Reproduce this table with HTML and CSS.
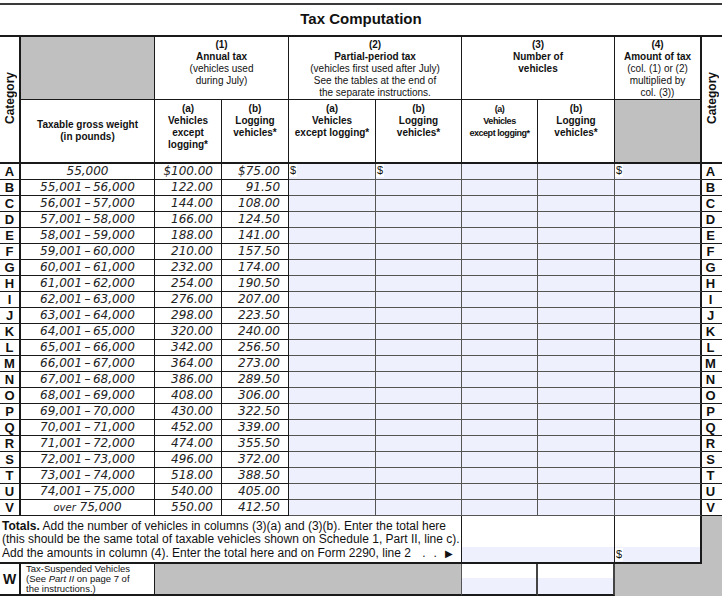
FILE: index.html
```html
<!DOCTYPE html>
<html lang="en">
<head>
<meta charset="utf-8">
<title>Tax Computation</title>
<link rel="stylesheet" href="styles.css">
</head>
<body>
<div class="topline"></div>
<h1 class="title">Tax Computation</h1>
<table class="tax">
  <colgroup>
    <col class="c0"><col class="c1"><col class="c2"><col class="c3"><col class="c4">
    <col class="c5"><col class="c6"><col class="c7"><col class="c8"><col class="c9">
  </colgroup>
  <thead>
    <tr class="hr1">
      <th rowspan="2" class="catv"><span class="vert">Category</span></th>
      <th class="grey"></th>
      <th colspan="2"><b>(1)<br>Annual tax</b><br>(vehicles used<br>during July)</th>
      <th colspan="2"><b>(2)<br>Partial-period tax</b><br>(vehicles first used after July)<br>See the tables at the end of<br>the separate instructions.</th>
      <th colspan="2"><b>(3)<br>Number of<br>vehicles</b></th>
      <th class="c4r"><b>(4)<br>Amount of tax</b><br>(col. (1) or (2)<br>multiplied by<br>col. (3))</th>
      <th rowspan="2" class="catv r"><span class="vert">Category</span></th>
    </tr>
    <tr class="hr2">
      <th class="wt">Taxable gross weight<br>(in pounds)</th>
      <th class="b">(a)<br>Vehicles<br>except<br>logging*</th>
      <th class="b">(b)<br>Logging<br>vehicles*</th>
      <th class="b">(a)<br>Vehicles<br>except logging*</th>
      <th class="b">(b)<br>Logging<br>vehicles*</th>
      <th class="b narrow">(a)<br>Vehicles<br>except logging*</th>
      <th class="b">(b)<br>Logging<br>vehicles*</th>
      <th class="grey c4r"></th>
    </tr>
  </thead>
  <tbody>
    <tr class="d"><td class="cat">A</td><td class="wt">55,000</td><td class="amt">$100.00</td><td class="amt">$75.00</td><td class="in"><span class="dollar">$</span></td><td class="in"><span class="dollar">$</span></td><td class="in"></td><td class="in"></td><td class="in in4"><span class="dollar">$</span></td><td class="cat r">A</td></tr>
    <tr class="d"><td class="cat">B</td><td class="wt">55,001&thinsp;–&thinsp;56,000</td><td class="amt">122.00</td><td class="amt">91.50</td><td class="in"></td><td class="in"></td><td class="in"></td><td class="in"></td><td class="in in4"></td><td class="cat r">B</td></tr>
    <tr class="d"><td class="cat">C</td><td class="wt">56,001&thinsp;–&thinsp;57,000</td><td class="amt">144.00</td><td class="amt">108.00</td><td class="in"></td><td class="in"></td><td class="in"></td><td class="in"></td><td class="in in4"></td><td class="cat r">C</td></tr>
    <tr class="d"><td class="cat">D</td><td class="wt">57,001&thinsp;–&thinsp;58,000</td><td class="amt">166.00</td><td class="amt">124.50</td><td class="in"></td><td class="in"></td><td class="in"></td><td class="in"></td><td class="in in4"></td><td class="cat r">D</td></tr>
    <tr class="d"><td class="cat">E</td><td class="wt">58,001&thinsp;–&thinsp;59,000</td><td class="amt">188.00</td><td class="amt">141.00</td><td class="in"></td><td class="in"></td><td class="in"></td><td class="in"></td><td class="in in4"></td><td class="cat r">E</td></tr>
    <tr class="d"><td class="cat">F</td><td class="wt">59,001&thinsp;–&thinsp;60,000</td><td class="amt">210.00</td><td class="amt">157.50</td><td class="in"></td><td class="in"></td><td class="in"></td><td class="in"></td><td class="in in4"></td><td class="cat r">F</td></tr>
    <tr class="d"><td class="cat">G</td><td class="wt">60,001&thinsp;–&thinsp;61,000</td><td class="amt">232.00</td><td class="amt">174.00</td><td class="in"></td><td class="in"></td><td class="in"></td><td class="in"></td><td class="in in4"></td><td class="cat r">G</td></tr>
    <tr class="d"><td class="cat">H</td><td class="wt">61,001&thinsp;–&thinsp;62,000</td><td class="amt">254.00</td><td class="amt">190.50</td><td class="in"></td><td class="in"></td><td class="in"></td><td class="in"></td><td class="in in4"></td><td class="cat r">H</td></tr>
    <tr class="d"><td class="cat">I</td><td class="wt">62,001&thinsp;–&thinsp;63,000</td><td class="amt">276.00</td><td class="amt">207.00</td><td class="in"></td><td class="in"></td><td class="in"></td><td class="in"></td><td class="in in4"></td><td class="cat r">I</td></tr>
    <tr class="d"><td class="cat">J</td><td class="wt">63,001&thinsp;–&thinsp;64,000</td><td class="amt">298.00</td><td class="amt">223.50</td><td class="in"></td><td class="in"></td><td class="in"></td><td class="in"></td><td class="in in4"></td><td class="cat r">J</td></tr>
    <tr class="d"><td class="cat">K</td><td class="wt">64,001&thinsp;–&thinsp;65,000</td><td class="amt">320.00</td><td class="amt">240.00</td><td class="in"></td><td class="in"></td><td class="in"></td><td class="in"></td><td class="in in4"></td><td class="cat r">K</td></tr>
    <tr class="d"><td class="cat">L</td><td class="wt">65,001&thinsp;–&thinsp;66,000</td><td class="amt">342.00</td><td class="amt">256.50</td><td class="in"></td><td class="in"></td><td class="in"></td><td class="in"></td><td class="in in4"></td><td class="cat r">L</td></tr>
    <tr class="d"><td class="cat">M</td><td class="wt">66,001&thinsp;–&thinsp;67,000</td><td class="amt">364.00</td><td class="amt">273.00</td><td class="in"></td><td class="in"></td><td class="in"></td><td class="in"></td><td class="in in4"></td><td class="cat r">M</td></tr>
    <tr class="d"><td class="cat">N</td><td class="wt">67,001&thinsp;–&thinsp;68,000</td><td class="amt">386.00</td><td class="amt">289.50</td><td class="in"></td><td class="in"></td><td class="in"></td><td class="in"></td><td class="in in4"></td><td class="cat r">N</td></tr>
    <tr class="d"><td class="cat">O</td><td class="wt">68,001&thinsp;–&thinsp;69,000</td><td class="amt">408.00</td><td class="amt">306.00</td><td class="in"></td><td class="in"></td><td class="in"></td><td class="in"></td><td class="in in4"></td><td class="cat r">O</td></tr>
    <tr class="d"><td class="cat">P</td><td class="wt">69,001&thinsp;–&thinsp;70,000</td><td class="amt">430.00</td><td class="amt">322.50</td><td class="in"></td><td class="in"></td><td class="in"></td><td class="in"></td><td class="in in4"></td><td class="cat r">P</td></tr>
    <tr class="d"><td class="cat">Q</td><td class="wt">70,001&thinsp;–&thinsp;71,000</td><td class="amt">452.00</td><td class="amt">339.00</td><td class="in"></td><td class="in"></td><td class="in"></td><td class="in"></td><td class="in in4"></td><td class="cat r">Q</td></tr>
    <tr class="d"><td class="cat">R</td><td class="wt">71,001&thinsp;–&thinsp;72,000</td><td class="amt">474.00</td><td class="amt">355.50</td><td class="in"></td><td class="in"></td><td class="in"></td><td class="in"></td><td class="in in4"></td><td class="cat r">R</td></tr>
    <tr class="d"><td class="cat">S</td><td class="wt">72,001&thinsp;–&thinsp;73,000</td><td class="amt">496.00</td><td class="amt">372.00</td><td class="in"></td><td class="in"></td><td class="in"></td><td class="in"></td><td class="in in4"></td><td class="cat r">S</td></tr>
    <tr class="d"><td class="cat">T</td><td class="wt">73,001&thinsp;–&thinsp;74,000</td><td class="amt">518.00</td><td class="amt">388.50</td><td class="in"></td><td class="in"></td><td class="in"></td><td class="in"></td><td class="in in4"></td><td class="cat r">T</td></tr>
    <tr class="d"><td class="cat">U</td><td class="wt">74,001&thinsp;–&thinsp;75,000</td><td class="amt">540.00</td><td class="amt">405.00</td><td class="in"></td><td class="in"></td><td class="in"></td><td class="in"></td><td class="in in4"></td><td class="cat r">U</td></tr>
    <tr class="d"><td class="cat">V</td><td class="wt"><span class="over">over</span> 75,000</td><td class="amt">550.00</td><td class="amt">412.50</td><td class="in"></td><td class="in"></td><td class="in"></td><td class="in"></td><td class="in in4"></td><td class="cat r">V</td></tr>
    <tr class="tot">
      <td colspan="6" class="ttext"><b>Totals.</b> Add the number of vehicles in columns (3)(a) and (3)(b). Enter the total here<br>(this should be the same total of taxable vehicles shown on Schedule 1, Part II, line c).<br>Add the amounts in column (4). Enter the total here and on Form 2290, line 2 <span class="dots">.</span><span class="dots">.</span><span class="arrow">▶</span></td>
      <td colspan="2" class="tbox"></td>
      <td class="tbox t4"><span class="dollar">$</span></td>
      <td rowspan="2" class="gr"></td>
    </tr>
    <tr class="w">
      <td class="wl">W</td>
      <td class="wdesc">Tax-Suspended Vehicles<br>(See <i>Part II</i> on page 7 of<br>the instructions.)</td>
      <td colspan="4" class="wg"></td>
      <td class="wbox"></td>
      <td class="wbox"></td>
      <td class="gr"></td>
    </tr>
  </tbody>
</table>
</body>
</html>
```

FILE: styles.css
```css
* { box-sizing: border-box; }
html, body { margin: 0; padding: 0; background: #fff; }
body {
  width: 722px;
  height: 596px;
  overflow: hidden;
  font-family: "Liberation Sans", Arial, sans-serif;
  font-size: 11px;
  line-height: 13px;
  color: #111;
}
.topline { margin-top: 3px; height: 2px; background: #3a3a3a; }
.title {
  margin: 0;
  height: 32px;
  line-height: 28px;
  font-size: 15px;
  font-weight: bold;
  text-align: center;
  border-bottom: 2px solid #1a1a1a;
}
.tax {
  width: 722px;
  table-layout: fixed;
  border-collapse: separate;
  border-spacing: 0;
}
.tax th, .tax td {
  padding: 0;
  border-style: solid;
  border-color: #1a1a1a;
  border-width: 0 1px 1px 0;
}
col.c0 { width: 21px; }
col.c1 { width: 134px; }
col.c2 { width: 67px; }
col.c3 { width: 67px; }
col.c4 { width: 87px; }
col.c5 { width: 86px; }
col.c6 { width: 76px; }
col.c7 { width: 77px; }
col.c8 { width: 87px; }
col.c9 { width: 20px; }

.hr1 { height: 63px; }
.hr2 { height: 64px; }
.tax thead th {
  font-size: 10px;
  line-height: 12px;
  font-weight: normal;
  vertical-align: top;
  text-align: center;
}
.hr1 th { padding-top: 2px; }
.hr2 th { padding-top: 3px; border-bottom-width: 2px; }
.tax thead th.b { font-weight: bold; }
.tax thead th.narrow { font-size: 9px; letter-spacing: -0.45px; }
.tax thead th.wt { vertical-align: middle; font-weight: bold; padding-top: 0; }
.tax thead th.catv {
  vertical-align: middle;
  border-bottom-width: 2px;
  border-right-width: 2px;
  padding: 0;
}
.tax thead th.catv.r { border-right-width: 0; }
.vert {
  display: inline-block;
  writing-mode: vertical-rl;
  transform: rotate(180deg);
  font-size: 12px;
  font-weight: bold;
  line-height: 14px;
}
.tax .grey { background: #c0c0c0; }
.tax .c4r { border-right-width: 2px; }

.d { height: 16px; }
.tax tr.d td { line-height: 15px; }
.tax td.cat {
  font-size: 13px;
  font-weight: bold;
  text-align: center;
  border-right-width: 2px;
}
.tax td.cat.r { border-right-width: 0; padding-right: 3px; }
.tax td.wt, .tax td.amt {
  font-family: "DejaVu Sans", sans-serif;
  font-style: oblique;
  font-size: 12px;
  color: #222;
  white-space: nowrap;
}
.tax td.wt { text-align: center; }
.tax td.amt { text-align: right; padding-right: 8px; }
.over { font-size: 10px; }
.tax td.in {
  background: #eef0fd;
  border-color: #555;
  vertical-align: top;
  text-align: left;
  font-size: 11px;
}
.tax td.in4 { border-right: 2px solid #1a1a1a; }
.dollar {
  display: inline-block;
  vertical-align: top;
  background: #fff;
  font-size: 11px;
  line-height: 13px;
  padding: 0 1px;
  color: #111;
}

.tot { height: 48px; }
.tax td.ttext {
  font-size: 12px;
  line-height: 13.3px;
  padding: 4px 0 0 2px;
  vertical-align: top;
  text-align: left;
  white-space: nowrap;
  border-bottom-width: 2px;
}
.dots { margin-left: 8px; }
.arrow { margin-left: 8px; font-size: 10px; }
.tax td.tbox {
  background: linear-gradient(#fff 0, #fff 31px, #eef0fd 31px);
  border-bottom-width: 2px;
  vertical-align: bottom;
  text-align: left;
}
.tax td.tbox .dollar { margin-bottom: 1px; vertical-align: bottom; }
.tax td.t4 { border-right-width: 2px; }
.tax td.gr { background: #c0c0c0; border-width: 0; }

.w { height: 32px; }
.tax td.wl {
  font-size: 14px;
  font-weight: bold;
  text-align: center;
  border-right-width: 2px;
  border-bottom-width: 2px;
}
.tax td.wdesc {
  font-size: 9.5px;
  line-height: 10px;
  padding-left: 5px;
  text-align: left;
  vertical-align: middle;
  border-bottom-width: 2px;
  white-space: nowrap;
}
.tax td.wg {
  background: #c0c0c0;
  border-right-color: #555;
  border-bottom-width: 2px;
}
.tax td.wbox {
  background: linear-gradient(#fff 0, #fff 14px, #eef0fd 14px);
  border-right: 2px solid #444;
  border-bottom: 2px solid #1a1a1a;
}
```
